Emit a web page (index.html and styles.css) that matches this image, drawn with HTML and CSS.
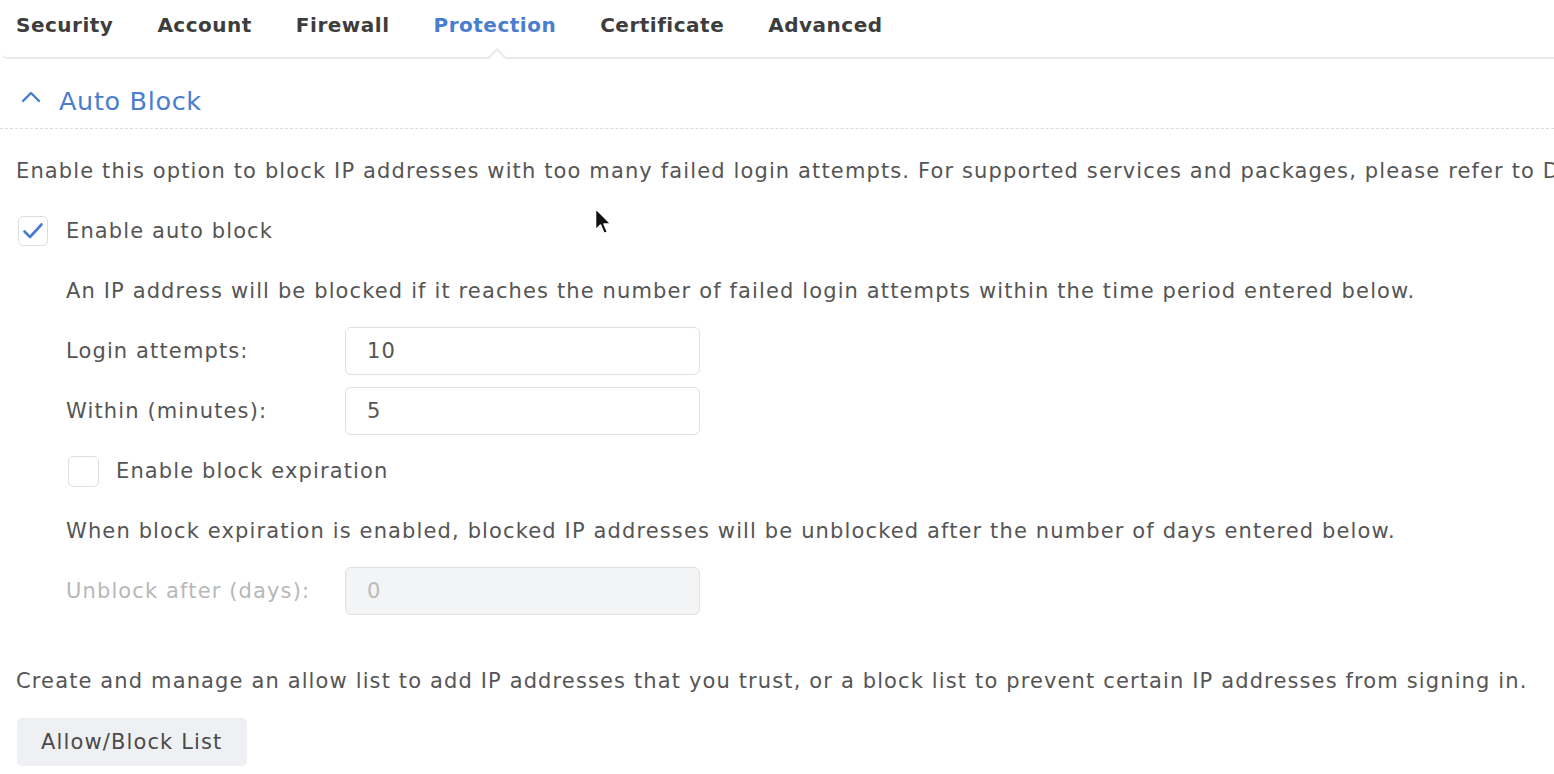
FILE: index.html
```html
<!DOCTYPE html>
<html>
<head>
<meta charset="utf-8">
<link rel="stylesheet" href="styles.css">
</head>
<body>
<div class="page">
  <nav class="tabs">
    <span class="tab">Security</span>
    <span class="tab">Account</span>
    <span class="tab">Firewall</span>
    <span class="tab active">Protection</span>
    <span class="tab">Certificate</span>
    <span class="tab">Advanced</span>
  </nav>
  <div class="section-head">
    <svg class="chev" width="20" height="12" viewBox="0 0 20 12"><path d="M2 10 L10 2 L18 10" fill="none" stroke="#4a7bcb" stroke-width="2.4" stroke-linecap="round" stroke-linejoin="round"/></svg>
    <span class="section-title">Auto Block</span>
  </div>
  <div class="content">
    <div class="row"><span class="text">Enable this option to block IP addresses with too many failed login attempts. For supported services and packages, please refer to DSM Help.</span></div>
    <div class="row">
      <span class="cb checked"><svg width="22" height="18" viewBox="0 0 22 18"><path d="M2.5 9.5 L8 15 L19.5 2.5" fill="none" stroke="#4a7bcb" stroke-width="2.6" stroke-linecap="round" stroke-linejoin="round"/></svg></span>
      <span class="text cb-label">Enable auto block</span>
    </div>
    <div class="indent">
      <div class="row"><span class="text">An IP address will be blocked if it reaches the number of failed login attempts within the time period entered below.</span></div>
      <div class="row field">
        <span class="text label">Login attempts:</span>
        <span class="input">10</span>
      </div>
      <div class="row field">
        <span class="text label">Within (minutes):</span>
        <span class="input">5</span>
      </div>
      <div class="row">
        <span class="cb small"></span>
        <span class="text cb-label">Enable block expiration</span>
      </div>
      <div class="row"><span class="text">When block expiration is enabled, blocked IP addresses will be unblocked after the number of days entered below.</span></div>
      <div class="row field">
        <span class="text label disabled">Unblock after (days):</span>
        <span class="input disabled">0</span>
      </div>
    </div>
    <div class="row spaced"><span class="text">Create and manage an allow list to add IP addresses that you trust, or a block list to prevent certain IP addresses from signing in.</span></div>
    <div class="row"><span class="btn">Allow/Block List</span></div>
  </div>
  <svg class="cursor" width="20" height="30" viewBox="0 0 20 30"><path d="M1.5 1.5 L1.5 23 L6.5 18 L10 26.5 L13.5 25 L10 17 L17 17 Z" fill="#111" stroke="#fff" stroke-width="1.6" stroke-linejoin="round"/></svg>
</div>
</body>
</html>
```

FILE: styles.css
```css
html, body {
  margin: 0;
  padding: 0;
  background: #ffffff;
}
body {
  font-family: "DejaVu Sans", Verdana, sans-serif;
  color: #555555;
  overflow: hidden;
  width: 1554px;
  height: 774px;
}
.page {
  position: relative;
  width: 1554px;
  height: 774px;
  overflow: hidden;
}
.tabs {
  display: flex;
  gap: 44px;
  height: 57px;
  padding-left: 16px;
  margin-left: 2px;
  border-bottom: 2px solid #e9e9e9;
  border-bottom-left-radius: 6px;
  box-sizing: content-box;
  position: relative;
  align-items: flex-start;
}
.tab {
  font-weight: bold;
  font-size: 20px;
  letter-spacing: 0.5px;
  color: #3d3d3d;
  line-height: 24px;
  padding-top: 13px;
  position: relative;
  height: 44px;
  white-space: nowrap;
}
.tabs .tab:first-child { margin-left: -2px; }
.tab.active {
  color: #4a7dcf;
}
.tab.active::after {
  content: "";
  position: absolute;
  left: 50%;
  bottom: -8px;
  width: 12px;
  height: 12px;
  margin-left: -5px;
  background: #ffffff;
  border-left: 2px solid #e9e9e9;
  border-top: 2px solid #e9e9e9;
  transform: rotate(45deg);
}
.section-head {
  display: flex;
  align-items: center;
  height: 70px;
  padding-left: 21px;
  padding-top: 9px;
  box-sizing: border-box;
  border-bottom: 1.5px dashed #dcdcdc;
}
.section-head .chev {
  margin-right: 18px;
  margin-top: -2px;
}
.section-title {
  font-size: 25.5px;
  letter-spacing: 0.65px;
  color: #4a7dcf;
  padding-top: 6px;
}
.content {
  padding-top: 12px;
  padding-left: 16px;
  overflow: hidden;
}
.row {
  display: flex;
  align-items: center;
  height: 60px;
  white-space: nowrap;
}
.text {
  font-size: 21px;
  letter-spacing: 1.13px;
  color: #555555;
}
.indent {
  padding-left: 50px;
}
.cb {
  width: 30px;
  height: 30px;
  box-sizing: border-box;
  border: 1.5px solid #dedede;
  border-radius: 5px;
  display: flex;
  align-items: center;
  justify-content: center;
  background: #ffffff;
}
.cb.checked {
  margin-left: 2px;
}
.cb.small {
  margin-left: 2px;
  width: 31px;
  height: 31px;
}
.cb-label {
  margin-left: 18px;
}
.cb.small + .cb-label {
  margin-left: 17px;
}
.field .label {
  width: 279px;
}
.input {
  width: 355px;
  height: 48px;
  box-sizing: border-box;
  border: 1.5px solid #e0e0e0;
  border-radius: 6px;
  font-size: 21px;
  letter-spacing: 1.13px;
  color: #555555;
  display: flex;
  align-items: center;
  padding-left: 21px;
  background: #ffffff;
}
.disabled.label {
  color: #b8b8b8;
}
.input.disabled {
  background: #f3f4f6;
  color: #bbbbbb;
}
.spaced {
  margin-top: 30px;
}
.btn {
  display: inline-flex;
  align-items: center;
  height: 48px;
  padding: 0 25px 0 24px;
  background: #eef0f3;
  border-radius: 5px;
  font-size: 21px;
  letter-spacing: 1.13px;
  color: #4a4a4a;
  margin-left: 1px;
  margin-top: 1px;
}
.cursor {
  position: absolute;
  left: 594px;
  top: 207px;
}
```
